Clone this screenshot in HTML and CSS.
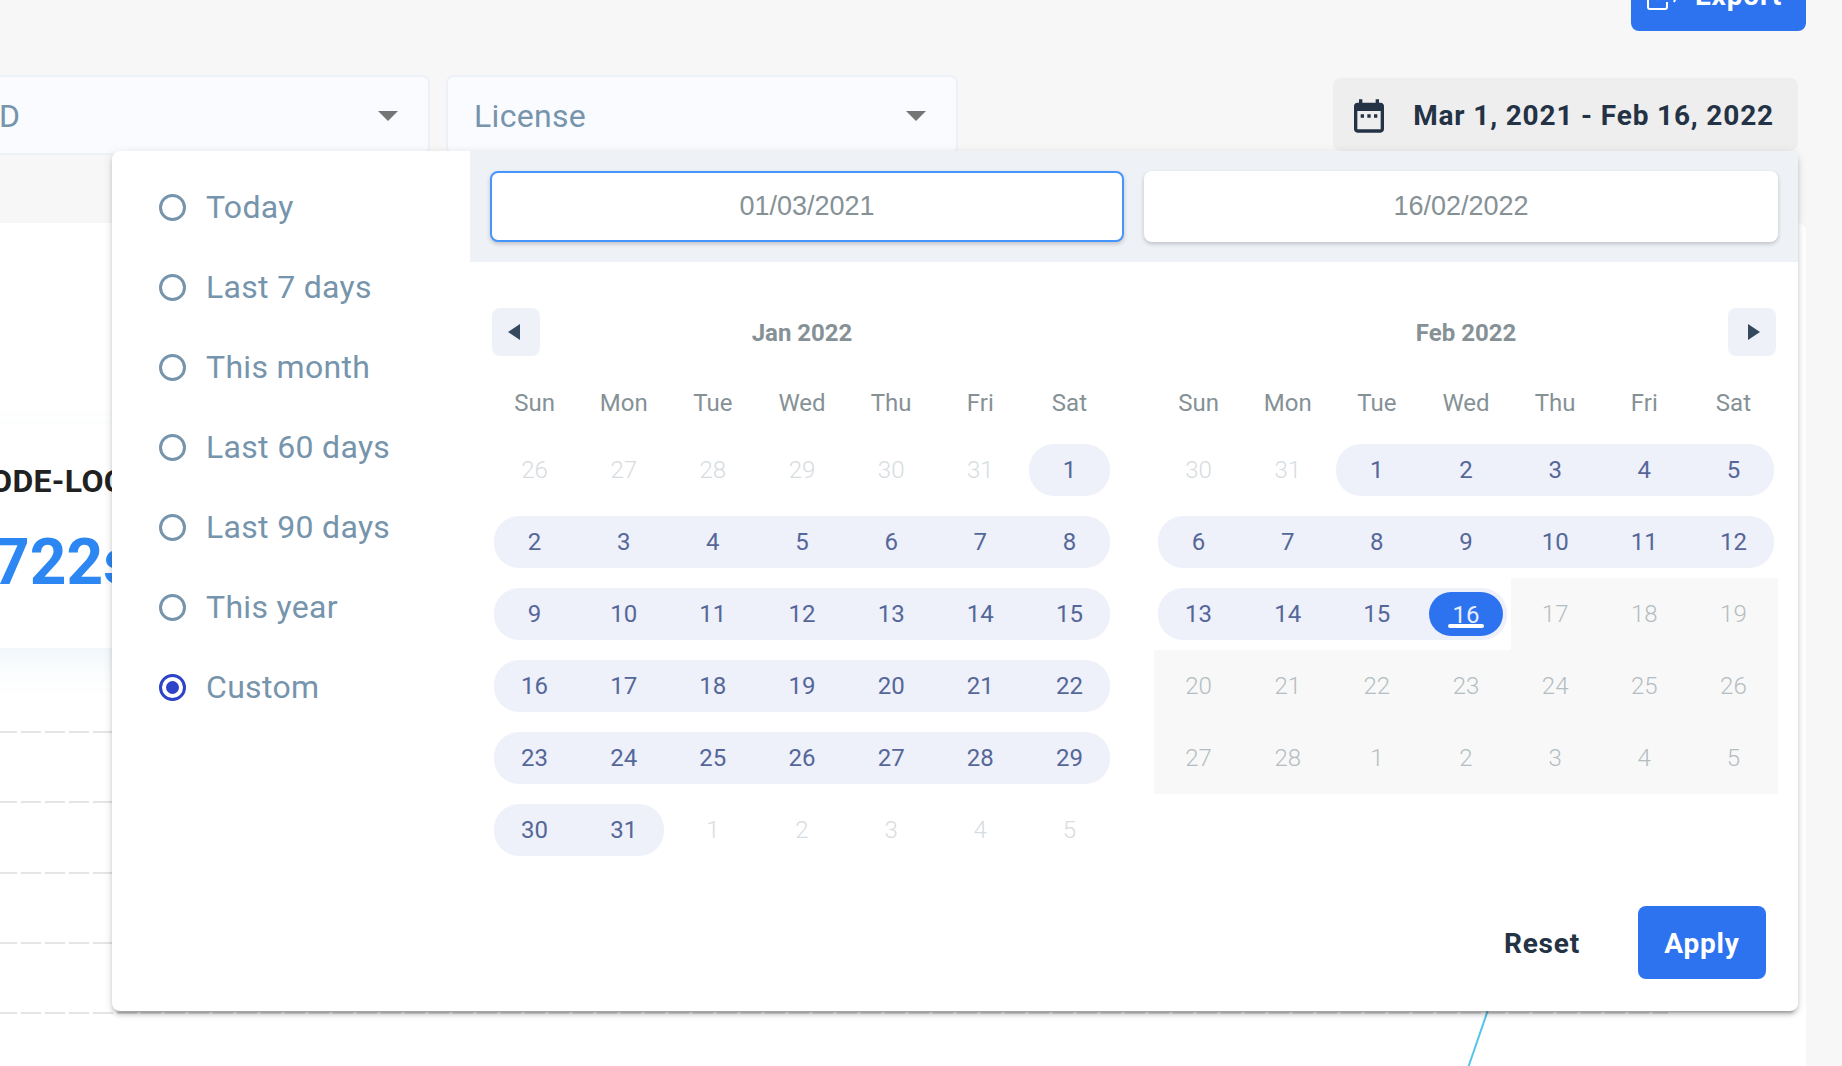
FILE: index.html
```html
<!DOCTYPE html>
<html lang="en">
<head>
<meta charset="utf-8">
<title>Usage report</title>
<link rel="stylesheet" href="styles.css">
</head>
<body>
<header class="topbar">
  <button class="btn btn-primary btn-export" type="button">
    <svg class="icon" viewBox="0 0 32 32" fill="none" stroke="currentColor" stroke-width="2" aria-hidden="true">
      <path d="M12 9H3a2 2 0 0 0-2 2v16a2 2 0 0 0 2 2h15a2 2 0 0 0 2-2v-5M10 20c1-5 6-7 19-7M22 4l9 9-4 9"/>
    </svg>
    Export
  </button>
</header>

<div class="filters">
  <div class="field field-first">
    <select class="select" aria-label="ID"><option>D</option></select>
    <svg class="caret" viewBox="0 0 20 10" aria-hidden="true"><path d="M0 0h20L10 10z"/></svg>
  </div>
  <div class="field">
    <select class="select" aria-label="License"><option>License</option></select>
    <svg class="caret" viewBox="0 0 20 10" aria-hidden="true"><path d="M0 0h20L10 10z"/></svg>
  </div>

  <div class="range">
    <button class="btn btn-range" type="button" aria-expanded="true">
      <svg class="icon" viewBox="0 0 24 24" fill="currentColor" aria-hidden="true">
        <path d="M9 11H7v2h2v-2zm4 0h-2v2h2v-2zm4 0h-2v2h2v-2zm2-7h-1V2h-2v2H8V2H6v2H5c-1.110 0-1.990.9-1.990 2L3 20c0 1.100.89 2 2 2h14c1.100 0 2-.9 2-2V6c0-1.100-.9-2-2-2zm0 16H5V9h14v11z"/>
      </svg>
      Mar 1, 2021 - Feb 16, 2022
    </button>

    <div class="popover" role="dialog" aria-label="Date range">
      <div class="presets">
        <label class="preset"><input type="radio" name="preset">Today</label>
        <label class="preset"><input type="radio" name="preset">Last 7 days</label>
        <label class="preset"><input type="radio" name="preset">This month</label>
        <label class="preset"><input type="radio" name="preset">Last 60 days</label>
        <label class="preset"><input type="radio" name="preset">Last 90 days</label>
        <label class="preset"><input type="radio" name="preset">This year</label>
        <label class="preset"><input type="radio" name="preset" checked>Custom</label>
      </div>

      <div class="picker">
        <div class="dates">
          <input class="date date-active" type="text" value="01/03/2021" aria-label="Start date">
          <input class="date" type="text" value="16/02/2022" aria-label="End date">
        </div>

        <div class="months">
          <section class="month">
            <div class="month-head">
              <button class="nav nav-prev" type="button" aria-label="Previous month"><svg viewBox="0 0 12 16" aria-hidden="true"><path d="M12 0v16L0 8z"/></svg></button>
              <h2 class="month-name">Jan 2022</h2>
            </div>
            <table class="days">
              <thead><tr><th>Sun</th><th>Mon</th><th>Tue</th><th>Wed</th><th>Thu</th><th>Fri</th><th>Sat</th></tr></thead>
              <tbody>
                <tr><td><button>26</button></td><td><button>27</button></td><td><button>28</button></td><td><button>29</button></td><td><button>30</button></td><td><button>31</button></td><td class="in from"><button>1</button></td></tr>
                <tr><td class="in"><button>2</button></td><td class="in"><button>3</button></td><td class="in"><button>4</button></td><td class="in"><button>5</button></td><td class="in"><button>6</button></td><td class="in"><button>7</button></td><td class="in"><button>8</button></td></tr>
                <tr><td class="in"><button>9</button></td><td class="in"><button>10</button></td><td class="in"><button>11</button></td><td class="in"><button>12</button></td><td class="in"><button>13</button></td><td class="in"><button>14</button></td><td class="in"><button>15</button></td></tr>
                <tr><td class="in"><button>16</button></td><td class="in"><button>17</button></td><td class="in"><button>18</button></td><td class="in"><button>19</button></td><td class="in"><button>20</button></td><td class="in"><button>21</button></td><td class="in"><button>22</button></td></tr>
                <tr><td class="in"><button>23</button></td><td class="in"><button>24</button></td><td class="in"><button>25</button></td><td class="in"><button>26</button></td><td class="in"><button>27</button></td><td class="in"><button>28</button></td><td class="in"><button>29</button></td></tr>
                <tr><td class="in"><button>30</button></td><td class="in to"><button>31</button></td><td><button>1</button></td><td><button>2</button></td><td><button>3</button></td><td><button>4</button></td><td><button>5</button></td></tr>
              </tbody>
            </table>
          </section>

          <section class="month">
            <div class="month-head">
              <h2 class="month-name">Feb 2022</h2>
              <button class="nav nav-next" type="button" aria-label="Next month"><svg viewBox="0 0 12 16" aria-hidden="true"><path d="M0 0v16l12-8z"/></svg></button>
            </div>
            <table class="days">
              <thead><tr><th>Sun</th><th>Mon</th><th>Tue</th><th>Wed</th><th>Thu</th><th>Fri</th><th>Sat</th></tr></thead>
              <tbody>
                <tr><td><button>30</button></td><td><button>31</button></td><td class="in from"><button>1</button></td><td class="in"><button>2</button></td><td class="in"><button>3</button></td><td class="in"><button>4</button></td><td class="in"><button>5</button></td></tr>
                <tr><td class="in"><button>6</button></td><td class="in"><button>7</button></td><td class="in"><button>8</button></td><td class="in"><button>9</button></td><td class="in"><button>10</button></td><td class="in"><button>11</button></td><td class="in"><button>12</button></td></tr>
                <tr><td class="in"><button>13</button></td><td class="in"><button>14</button></td><td class="in"><button>15</button></td><td class="in to"><button><span class="picked">16</span></button></td><td class="off"><button disabled>17</button></td><td class="off"><button disabled>18</button></td><td class="off"><button disabled>19</button></td></tr>
                <tr><td class="off"><button disabled>20</button></td><td class="off"><button disabled>21</button></td><td class="off"><button disabled>22</button></td><td class="off"><button disabled>23</button></td><td class="off"><button disabled>24</button></td><td class="off"><button disabled>25</button></td><td class="off"><button disabled>26</button></td></tr>
                <tr><td class="off"><button disabled>27</button></td><td class="off"><button disabled>28</button></td><td class="off"><button disabled>1</button></td><td class="off"><button disabled>2</button></td><td class="off"><button disabled>3</button></td><td class="off"><button disabled>4</button></td><td class="off"><button disabled>5</button></td></tr>
              </tbody>
            </table>
          </section>
        </div>

        <div class="actions">
          <button class="btn btn-text" type="button">Reset</button>
          <button class="btn btn-primary" type="button">Apply</button>
        </div>
      </div>
    </div>
  </div>
</div>

<main class="report">
  <section class="kpi">
    <h2 class="kpi-title">ODE-LOC</h2>
    <p class="kpi-value">722s</p>
  </section>
  <svg class="chart" aria-hidden="true">
    <g stroke="#e5e5e5" stroke-width="2" stroke-dasharray="20 4" stroke-dashoffset="3">
      <path d="M0 84H1668M0 154H1668M0 225H1668M0 295H1668M0 365H1668"/>
    </g>
    <path d="M1489 359L1468 420" stroke="#54c4ea" stroke-width="2" fill="none"/>
  </svg>
</main>
</body>
</html>
```

FILE: styles.css
```css
*, *::before, *::after { box-sizing: border-box; }

body {
  margin: 0;
  padding-right: 36px;
  overflow-x: hidden;
  background: #f7f7f7;
  color: #243245;
  font-family: Roboto, "Liberation Sans", sans-serif;
}

button, input, select { font: inherit; }
button { border: 0; padding: 0; cursor: pointer; }
h2, p { margin: 0; }

/* Buttons */
.btn {
  display: flex;
  align-items: center;
  justify-content: center;
  min-width: 128px;
  height: 73px;
  padding: 2px 24px 0;
  border-radius: 8px;
  color: #243245;
  font-size: 28px;
  font-weight: 700;
  letter-spacing: 0.03em;
  white-space: nowrap;
}
.btn-primary { background: #2d73f0; color: #fff; }
.btn-text { background: none; }
.icon { width: 40px; height: 40px; }

/* The top bar is scrolled partly out of view */
.topbar {
  display: flex;
  justify-content: flex-end;
  margin-top: -42px;
}
.btn-export { gap: 16px; padding-left: 16px; }
.btn-export .icon { width: 32px; height: 32px; }

/* Filters */
.filters {
  display: flex;
  gap: 16px;
  padding: 44px 8px 68px 0;
}
.field {
  position: relative;
  width: 512px;
  height: 80px;
}
.field-first { margin-left: -82px; }
.select {
  width: 100%;
  height: 100%;
  padding: 2px 26px 0;
  appearance: none;
  border: 2px solid #ecf1f8;
  border-radius: 8px;
  background: #fafbff;
  color: #7694ac;
  font-size: 32px;
  letter-spacing: 0.01em;
}
.field-first .select { padding-left: 79px; }
.caret {
  position: absolute;
  top: 36px;
  right: 32px;
  width: 20px;
  height: 10px;
  fill: #757575;
  pointer-events: none;
}
.range {
  position: relative;
  height: 76px;
  margin-left: auto;
  padding-top: 3px;
}
.btn-range { gap: 24px; padding-left: 16px; background: #eee; }

/* Date range popover */
.popover {
  position: absolute;
  z-index: 1;
  top: 100%;
  right: 0;
  display: grid;
  grid-template-columns: 358px 1fr;
  width: calc(100vw - 156px);
  overflow: hidden;
  border-radius: 8px;
  background: #fff;
  box-shadow: 0 6px 2px -4px rgba(0, 0, 0, .2), 0 4px 4px rgba(0, 0, 0, .14), 0 2px 10px rgba(0, 0, 0, .12);
}

.presets { padding: 16px 0 0 47px; }
.preset {
  display: flex;
  align-items: center;
  gap: 20px;
  height: 80px;
  color: #7694ac;
  font-size: 32px;
  letter-spacing: 0.01em;
}
.preset input {
  display: grid;
  place-content: center;
  width: 27px;
  height: 27px;
  margin: 0;
  appearance: none;
  border: 3px solid #7694ac;
  border-radius: 50%;
}
.preset input:checked { border-color: #2d43c8; }
.preset input:checked::before {
  content: "";
  width: 13px;
  height: 13px;
  border-radius: 50%;
  background: #2d43c8;
}

.dates {
  display: grid;
  grid-template-columns: 1fr 1fr;
  gap: 20px;
  padding: 20px;
  background: #eef1f6;
}
.date {
  min-width: 0;
  height: 71px;
  border: 2px solid #fff;
  border-radius: 8px;
  background: #fff;
  box-shadow: 0 2px 4px rgba(0, 0, 0, .2);
  color: #869196;
  font-family: "Liberation Sans", Arial, sans-serif;
  font-size: 27px;
  text-align: center;
}
.date-active { border-color: #4695fb; }

.months {
  display: grid;
  grid-template-columns: 1fr 1fr;
  gap: 40px;
  padding: 46px 20px 40px;
}
.month-head {
  display: grid;
  grid-template-columns: 48px 1fr 48px;
  align-items: center;
  height: 48px;
  padding: 0 2px;
}
.month-name {
  grid-column: 2;
  padding-top: 2px;
  color: #869196;
  font-size: 24px;
  font-weight: 700;
  text-align: center;
}
.nav {
  display: grid;
  place-content: center;
  height: 48px;
  border-radius: 8px;
  background: #eef1f7;
}
.nav-prev { padding-right: 4px; }
.nav-next { padding-left: 4px; }
.nav svg { width: 12px; height: 16px; fill: #35495e; }

.days {
  width: 100%;
  margin-top: 14px;
  table-layout: fixed;
  border-collapse: collapse;
}
.days th {
  height: 64px;
  padding: 2px 0 0;
  color: #869196;
  font-size: 24px;
  font-weight: 400;
}
.days td { height: 72px; padding: 0; }
.days button {
  display: flex;
  align-items: center;
  justify-content: center;
  width: 100%;
  height: 52px;
  background: none;
  color: #d6dcdf;
  font-size: 24px;
  font-weight: 300;
}
.days .in button { background: #eef0fa; color: #556799; font-weight: 400; line-height: 30px; }
.days .off { background: #f8f8f8; }
.days .off button { color: #b4bdc1; }

/* Rounded ends where the range starts, stops or wraps to another week */
.days .in:first-child, .days .from { padding-left: 4px; }
.days .in:last-child, .days .to { padding-right: 4px; }
.days .in:first-child button, .days .from button {
  padding-right: 4px;
  border-top-left-radius: 25px;
  border-bottom-left-radius: 25px;
}
.days .in:last-child button, .days .to button {
  padding-left: 4px;
  border-top-right-radius: 25px;
  border-bottom-right-radius: 25px;
}
.days .from:last-child button { padding: 0; }
.picked {
  position: relative;
  width: 74px;
  height: 44px;
  border-radius: 22px;
  background: #2d73f0;
  color: #e6eefd;
  line-height: 46px;
}
.picked::after {
  content: "";
  position: absolute;
  bottom: 8px;
  left: 19px;
  width: 36px;
  height: 4px;
  border-radius: 2px;
  background: #fff;
}

.actions {
  display: flex;
  justify-content: flex-end;
  gap: 32px;
  padding: 0 32px 32px;
}

/* Report behind the popover */
.report {
  overflow: hidden;
  border-radius: 0 8px 0 0;
  background: #fff;
}
.kpi {
  height: 224px;
  margin: 201px 80px 0 -80px;
  padding: 37px 0 0 80px;
  box-shadow: 0 16px 40px -8px rgba(60, 140, 200, .1);
}
.kpi-title {
  margin: 0 0 22px -10px;
  color: #212121;
  font-size: 32px;
  font-weight: 700;
  letter-spacing: 0.01em;
  line-height: 40px;
}
.kpi-value {
  margin-left: -7px;
  color: #2d87f3;
  font-size: 64px;
  font-weight: 700;
  line-height: 80px;
}
.chart { display: block; width: 100%; height: 418px; }
```
